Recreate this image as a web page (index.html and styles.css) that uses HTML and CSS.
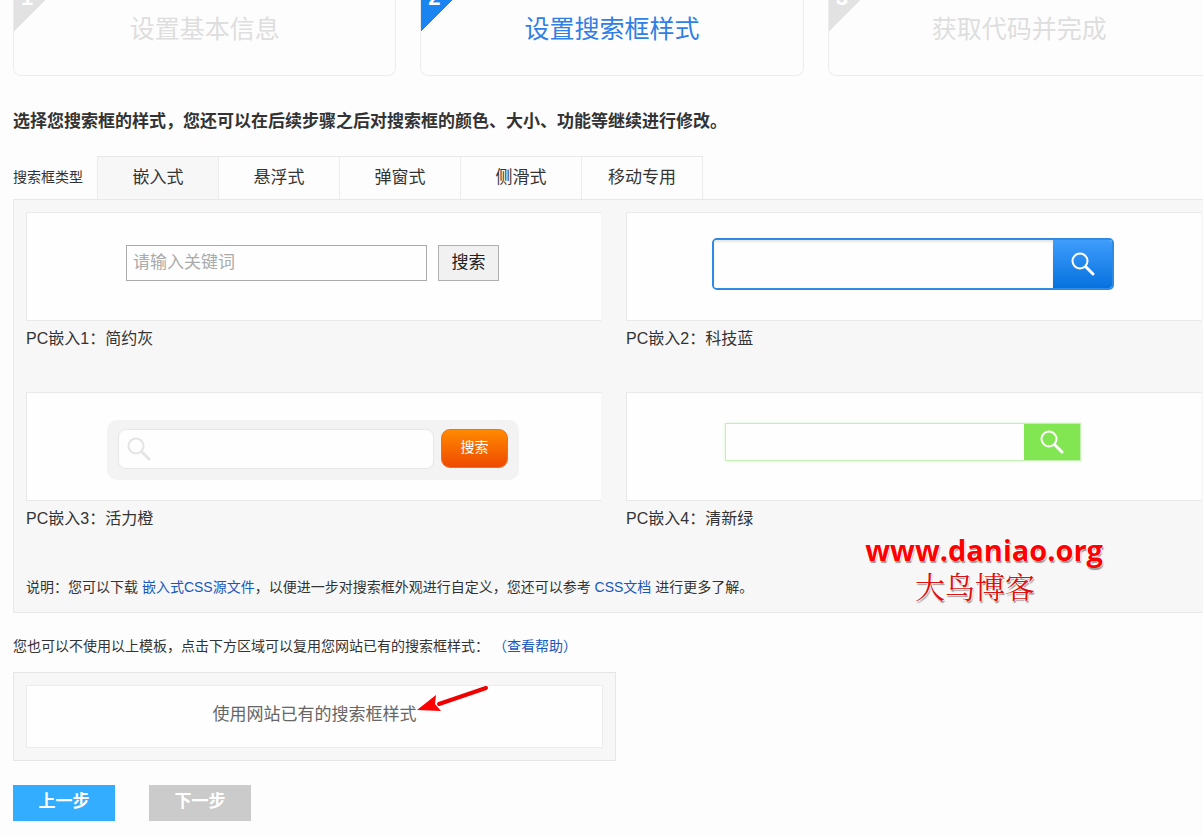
FILE: index.html
```html
<!DOCTYPE html>
<html lang="zh-CN">
<head>
<meta charset="utf-8">
<title>设置搜索框样式</title>
<link rel="stylesheet" href="styles.css">
</head>
<body>
<main class="page">
  <ol class="steps">
    <li class="step"><span class="step-badge"><b class="step-num">1</b></span>设置基本信息</li>
    <li class="step step-current"><span class="step-badge"><b class="step-num">2</b></span>设置搜索框样式</li>
    <li class="step"><span class="step-badge"><b class="step-num">3</b></span>获取代码并完成</li>
  </ol>

  <h1 class="intro">选择您搜索框的样式，您还可以在后续步骤之后对搜索框的颜色、大小、功能等继续进行修改。</h1>

  <div class="type-bar">
    <span class="type-label" id="type-label">搜索框类型</span>
    <div class="tabs" role="tablist" aria-labelledby="type-label">
      <button class="tab tab-active" role="tab" aria-selected="true">嵌入式</button>
      <button class="tab" role="tab">悬浮式</button>
      <button class="tab" role="tab">弹窗式</button>
      <button class="tab" role="tab">侧滑式</button>
      <button class="tab" role="tab">移动专用</button>
    </div>
  </div>

  <section class="panel">
    <div class="templates">
      <figure class="template">
        <div class="preview preview-gray">
          <form class="search search-gray">
            <input class="field" type="text" placeholder="请输入关键词" aria-label="请输入关键词">
            <button class="go" type="button">搜索</button>
          </form>
        </div>
        <figcaption class="caption">PC嵌入1：简约灰</figcaption>
      </figure>
      <figure class="template">
        <div class="preview preview-blue">
          <form class="search search-blue">
            <input class="field" type="text" aria-label="搜索">
            <button class="go" type="button" aria-label="搜索">
              <svg class="lens" viewBox="0 0 24 24"><circle cx="9" cy="9" r="7.5"/><path class="handle" d="M15 15l7 7"/></svg>
            </button>
          </form>
        </div>
        <figcaption class="caption">PC嵌入2：科技蓝</figcaption>
      </figure>
      <figure class="template">
        <div class="preview preview-orange">
          <form class="search search-orange">
            <label class="field-wrap">
              <svg class="lens" viewBox="0 0 24 24"><circle cx="9" cy="9" r="7.5"/><path class="handle" d="M15 15l7 7"/></svg>
              <input class="field" type="text" aria-label="搜索">
            </label>
            <button class="go" type="button">搜索</button>
          </form>
        </div>
        <figcaption class="caption">PC嵌入3：活力橙</figcaption>
      </figure>
      <figure class="template">
        <div class="preview preview-green">
          <form class="search search-green">
            <input class="field" type="text" aria-label="搜索">
            <button class="go" type="button" aria-label="搜索">
              <svg class="lens" viewBox="0 0 24 24"><circle cx="9" cy="9" r="7.5"/><path class="handle" d="M15 15l7 7"/></svg>
            </button>
          </form>
        </div>
        <figcaption class="caption">PC嵌入4：清新绿</figcaption>
      </figure>
    </div>
    <p class="note">说明：您可以下载 <a href="#css">嵌入式CSS源文件</a>，以便进一步对搜索框外观进行自定义，您还可以参考 <a href="#doc">CSS文档</a> 进行更多了解。</p>
    <div class="watermark">
      <span class="watermark-url">www.daniao.org</span>
      <span class="watermark-name">大鸟博客</span>
    </div>
  </section>

  <p class="reuse-note">您也可以不使用以上模板，点击下方区域可以复用您网站已有的搜索框样式： <a href="#help">（查看帮助）</a></p>
  <div class="reuse">
    <button class="reuse-button" type="button">
      <span class="reuse-text">使用网站已有的搜索框样式
        <svg class="arrow" viewBox="0 0 72 30"><path d="M69 3L22 19" stroke="#f00000" stroke-width="4" stroke-linecap="round"/><path d="M0 25L19 10L18 19L24 26Z" fill="#ff0000"/></svg>
      </span>
    </button>
  </div>

  <div class="actions">
    <button class="action action-prev" type="button">上一步</button>
    <button class="action action-next" type="button" disabled>下一步</button>
  </div>
</main>
</body>
</html>
```

FILE: styles.css
```css
* { box-sizing: border-box; }

html { overflow-x: hidden; }

body {
  margin: 0;
  overflow: hidden;
  background: #fdfdfd;
  color: #333;
  font: 14px/20px "Liberation Sans", "Noto Sans CJK SC", sans-serif;
  text-spacing-trim: space-all;
}

button, input {
  margin: 0;
  padding: 0;
  border: 0;
  border-radius: 0;
  font: inherit;
  color: inherit;
}

a { color: #1857bd; text-decoration: none; }

.page { margin: 0 -12px 0 13px; padding-bottom: 15px; }

/* Steps */
.steps {
  display: grid;
  grid-template-columns: repeat(3, 1fr);
  gap: 24px;
  margin: 0 4px 0 0;
  padding: 0;
  list-style: none;
}

.step {
  position: relative;
  overflow: hidden;
  height: 76px;
  padding-top: 9px;
  border: 1px solid #ececec;
  border-top: 0;
  border-radius: 0 0 8px 8px;
  color: #dedede;
  font-size: 25px;
  line-height: 40px;
  text-align: center;
}

.step-current { color: #2f7fe6; }

.step-badge {
  position: absolute;
  top: 0;
  left: 0;
  width: 32px;
  height: 31px;
  background: linear-gradient(to bottom right, #e2e2e2 50%, transparent 50%);
}

.step-current .step-badge { background: linear-gradient(to bottom right, #1a84f0 50%, transparent 50%); }

.step-num {
  position: absolute;
  top: -14px;
  left: 7px;
  color: #fff;
  font-size: 22px;
  line-height: 24px;
}

.intro {
  margin: 33px 0 22px;
  font-size: 17px;
  line-height: 25px;
}

/* Type tabs */
.type-bar { display: flex; align-items: stretch; }

.type-label { width: 84px; line-height: 43px; white-space: nowrap; }

.tabs { display: flex; border-left: 1px solid #ececec; }

.tab {
  width: 121px;
  height: 43px;
  border-top: 1px solid #e8e8e8;
  border-right: 1px solid #ececec;
  background: #fdfdfd;
  font-size: 17px;
}

.tab-active { background: #f7f7f7; }

/* Template panel */
.panel {
  position: relative;
  padding: 12px 12px 15px;
  border: 1px solid #e8e8e8;
  background: #f7f7f7;
}

.templates {
  display: grid;
  grid-template-columns: 1fr 1fr;
  gap: 35px 24px;
}

.template { margin: 0; }

.preview {
  display: flex;
  align-items: center;
  justify-content: center;
  height: 109px;
  border: 1px solid #e9e9e9;
  border-right-color: #f7f7f7;
  background: #fefefe;
}

.preview-gray { padding: 0 3px 7px 0; }
.preview-blue { padding: 0 2px 5px 0; }
.preview-orange { padding: 6px 2px 0 0; }
.preview-green { padding: 0 22px 9px 0; }

.caption { font-size: 16px; line-height: 36px; }

.search { display: flex; }

.field { flex: 1; min-width: 0; background: #fefefe; outline: 0; }

.lens { width: 24px; height: 24px; fill: none; stroke: #fff; stroke-width: 2; }

.handle { stroke-width: 3; stroke-linecap: round; }

.search-gray { gap: 11px; width: 373px; height: 36px; font-size: 17px; }
.search-gray .field { padding: 0 6px; border: 1px solid #aaa; }
.search-gray .field::placeholder { color: #aaa; opacity: 1; }
.search-gray .go { width: 61px; border: 1px solid #b0b0b0; background: #f1f1f1; color: #222; }

.search-blue {
  overflow: hidden;
  width: 402px;
  height: 52px;
  border: 2px solid #2f8ae6;
  border-radius: 5px;
}
.search-blue .field { box-shadow: inset 0 2px 2px #e6e6e6; }
.search-blue .go {
  width: 59px;
  background: linear-gradient(#3f9dfc, #0671de);
}
.search-blue .go .lens { display: block; margin: 0 auto; }

.search-orange {
  gap: 7px;
  width: 412px;
  height: 60px;
  padding: 9px 11px 11px;
  border-radius: 10px;
  background: #f3f3f3;
}
.field-wrap {
  display: flex;
  flex: 1;
  align-items: center;
  gap: 6px;
  padding: 0 8px;
  border: 1px solid #e8e8e8;
  border-radius: 8px;
  background: #fefefe;
}
.field-wrap .lens { stroke: #e4e4e4; }
.search-orange .go {
  width: 67px;
  height: 39px;
  padding-bottom: 2px;
  border: 1px solid #f07020;
  border-radius: 9px;
  background: linear-gradient(#ff8a00, #ee4a00);
  color: #fff;
}

.search-green {
  width: 356px;
  height: 38px;
  border: 1px solid #c4f0b4;
  box-shadow: 0 0 3px #d8f8cc;
}
.search-green .go { width: 56px; background: #82e653; }
.search-green .go .lens { display: block; margin: 0 auto; }

.note { margin: 40px 0 0; }

.watermark {
  position: absolute;
  top: 333px;
  right: 111px;
  display: flex;
  flex-direction: column;
  align-items: center;
  color: #f00;
  text-shadow: 1px 0 #fff, -1px 0 #fff, 0 -1px #fff, 1px 2px 1px #999;
}

.watermark-url { font: bold 29px/34px "Open Sans", sans-serif; }

.watermark-name {
  padding-right: 18px;
  color: #e01010;
  font: 30px/36px "Noto Serif CJK SC", "Noto Sans CJK SC", serif;
}

/* Reuse an existing search box */
.reuse-note { margin: 23px 0 16px; }

.reuse {
  width: calc(50% + 2px);
  padding: 12px;
  border: 1px solid #e6e6e6;
  background: #f7f7f7;
}

.reuse-button {
  display: block;
  width: 100%;
  height: 63px;
  padding-bottom: 3px;
  border: 1px solid #ececec;
  background: #fefefe;
  color: #666;
  font-size: 17px;
}

.reuse-text { position: relative; }

.arrow {
  position: absolute;
  top: -20px;
  left: 100%;
  width: 72px;
  height: 30px;
  fill: none;
}

/* Actions */
.actions { display: flex; gap: 34px; margin-top: 24px; }

.action {
  width: 102px;
  height: 36px;
  padding-bottom: 2px;
  color: #fff;
  font-size: 17px;
  font-weight: bold;
}

.action-prev { background: #33adff; }
.action-next { background: #cbcbcb; }
```
